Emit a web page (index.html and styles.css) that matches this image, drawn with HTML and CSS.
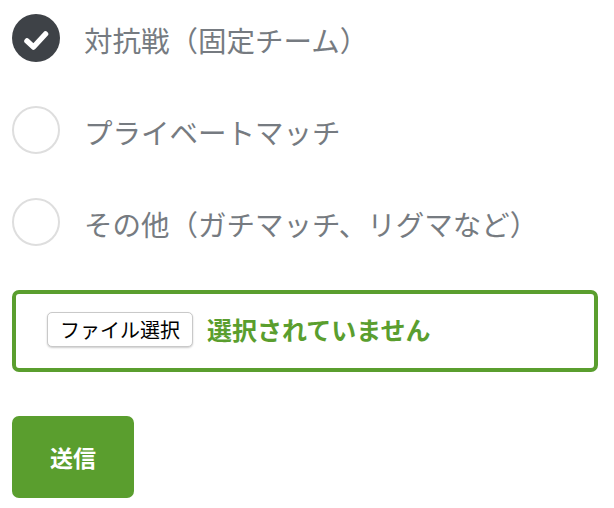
FILE: index.html
```html
<!DOCTYPE html>
<html lang="ja">
<head>
    <meta charset="UTF-8">
    <meta name="viewport" content="width=device-width, initial-scale=1.0">
    <title>エントリー</title>
    <link rel="stylesheet" href="styles.css">
</head>
<body>
    <form class="entry-form">
        <div class="radio-list">
            <label class="radio-item">
                <input type="radio" name="mode" value="team" checked>
                <span class="radio-mark">
                    <svg width="48" height="48" viewBox="0 0 48 48">
                        <polyline points="15,27 21.5,33 33.5,20" fill="none" stroke="#fff" stroke-width="5.5" stroke-linecap="round" stroke-linejoin="round"/>
                    </svg>
                </span>
                <span class="radio-text">対抗戦（固定チーム）</span>
            </label>
            <label class="radio-item">
                <input type="radio" name="mode" value="private">
                <span class="radio-mark"></span>
                <span class="radio-text">プライベートマッチ</span>
            </label>
            <label class="radio-item">
                <input type="radio" name="mode" value="other">
                <span class="radio-mark"></span>
                <span class="radio-text">その他（ガチマッチ、リグマなど）</span>
            </label>
        </div>

        <div class="file-box">
            <label class="file-button">
                <input type="file" name="image">
                ファイル選択
            </label>
            <span class="file-status">選択されていません</span>
        </div>

        <button type="submit" class="submit-button">送信</button>
    </form>
</body>
</html>
```

FILE: styles.css
```css
body {
    margin: 0;
    background-color: #fff;
    font-family: "Noto Sans CJK JP", "Noto Sans", sans-serif;
}

.entry-form {
    padding: 14px 16px 0 12px;
}

.radio-list {
    display: flex;
    flex-direction: column;
    gap: 44px;
}

.radio-item {
    display: flex;
    align-items: center;
    gap: 24px;
    height: 48px;
    cursor: pointer;
}

.radio-item input {
    display: none;
}

.radio-mark {
    box-sizing: border-box;
    width: 48px;
    height: 48px;
    flex-shrink: 0;
    border: 2px solid #dedede;
    border-radius: 50%;
    background-color: #fff;
    display: flex;
    align-items: center;
    justify-content: center;
}

.radio-mark svg {
    display: none;
}

.radio-item input:checked + .radio-mark {
    border: none;
    background-color: #3e4247;
}

.radio-item input:checked + .radio-mark svg {
    display: block;
}

.radio-text {
    font-size: 28.5px;
    font-weight: 400;
    line-height: 44px;
    padding-top: 4px;
    color: #767b81;
    white-space: nowrap;
}

.file-box {
    box-sizing: border-box;
    margin-top: 44px;
    height: 82px;
    border: 4px solid #5a9e2e;
    border-radius: 7px;
    padding: 0 31px;
    display: flex;
    align-items: center;
    gap: 14px;
}

.file-button {
    box-sizing: border-box;
    height: 35px;
    padding: 0 12px;
    border: 1px solid #c9c9c9;
    border-radius: 5px;
    background-color: #fff;
    box-shadow: 0 1px 2px rgba(0, 0, 0, 0.2);
    font-size: 20px;
    line-height: 33px;
    color: #000;
    cursor: pointer;
    margin-top: -4px;
}

.file-button input {
    display: none;
}

.file-status {
    font-size: 25px;
    font-weight: bold;
    color: #5a9e2e;
    margin-top: -4px;
}

.submit-button {
    display: block;
    margin-top: 44px;
    width: 122px;
    height: 82px;
    border: none;
    border-radius: 7px;
    background-color: #5a9e2e;
    color: #fff;
    font-family: "Noto Sans CJK JP", sans-serif;
    font-size: 23px;
    font-weight: bold;
    cursor: pointer;
}
```
